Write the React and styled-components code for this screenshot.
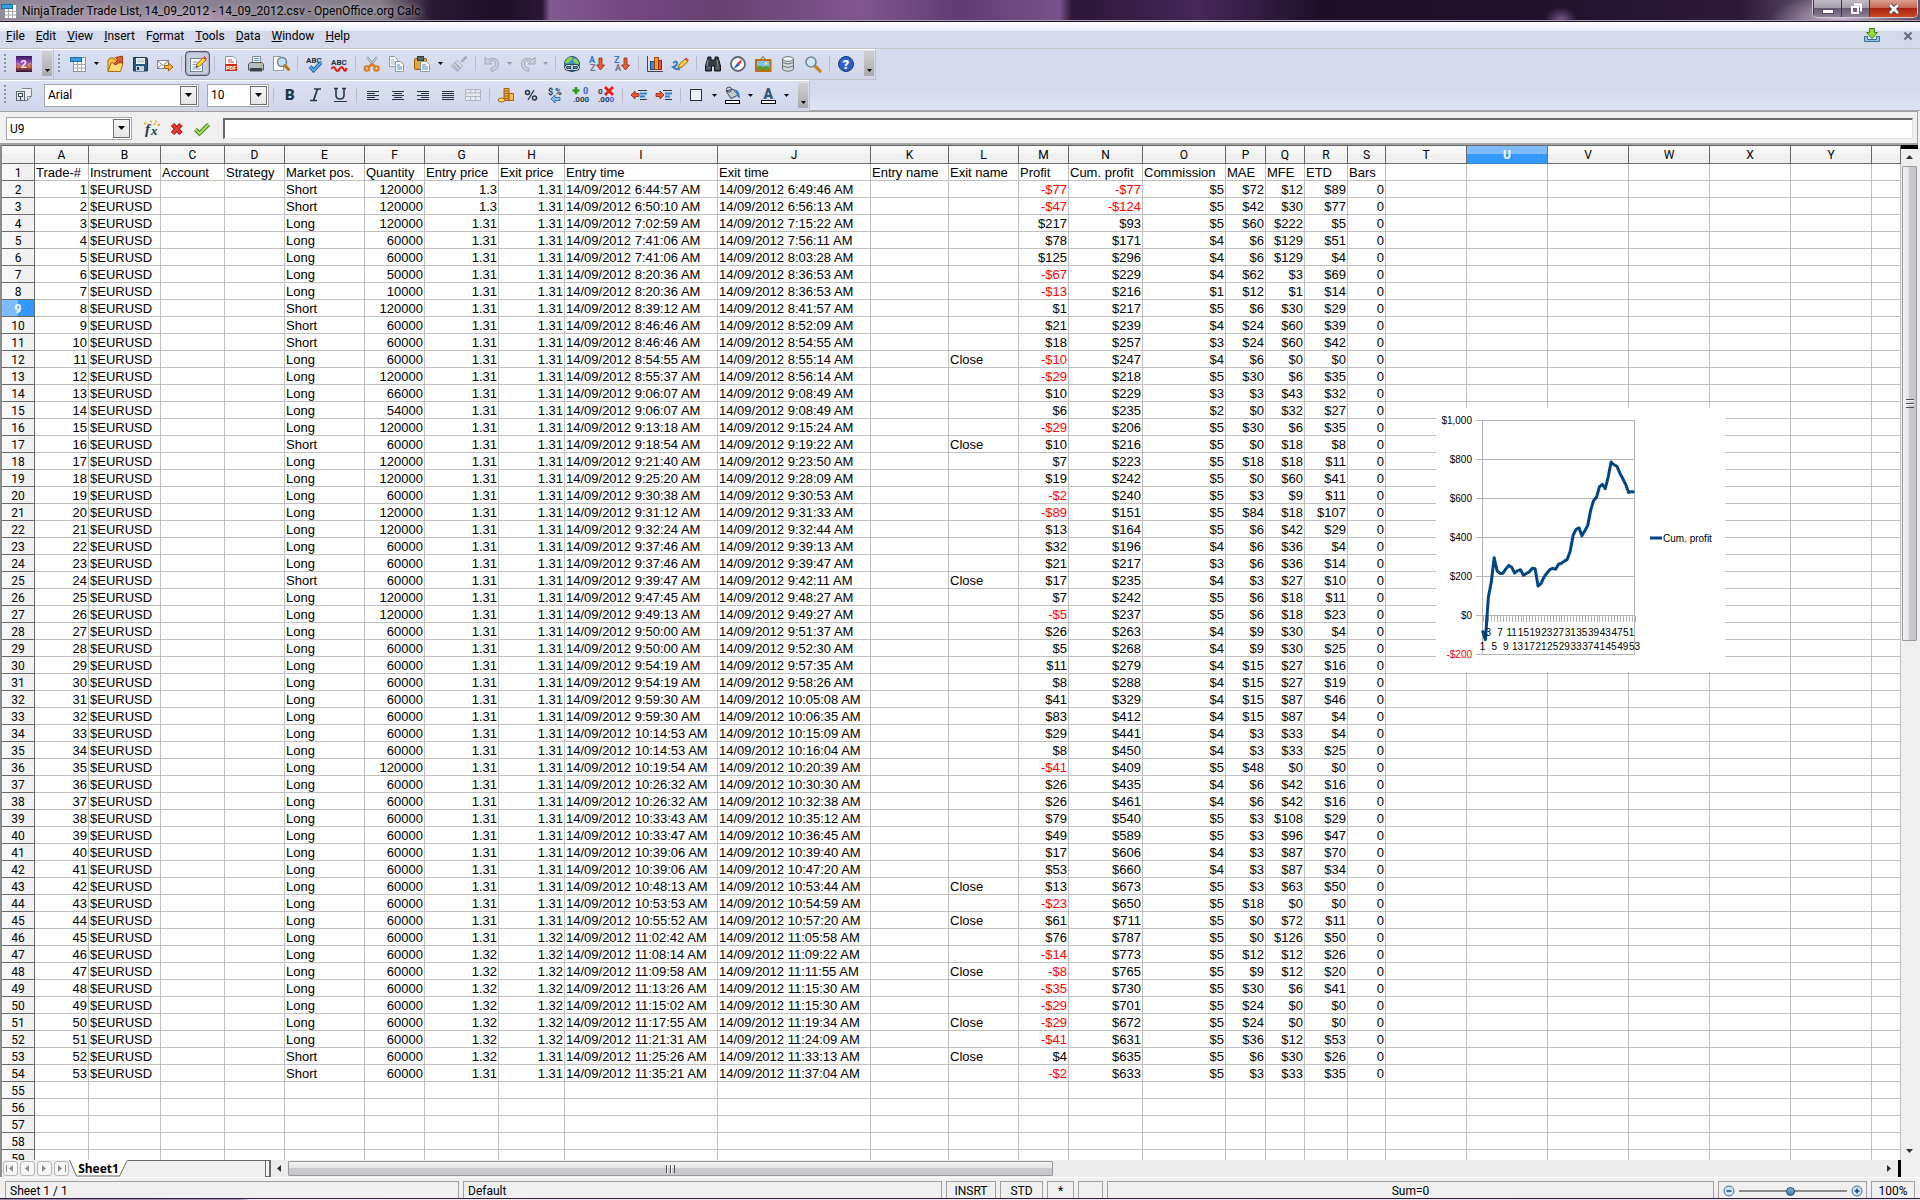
import React, { useState } from 'react'
import styled, { createGlobalStyle } from 'styled-components';


const GlobalStyle = createGlobalStyle`
  * {
    box-sizing: border-box;
  }

  body {
    margin: 0;
    background: #f0f0f0;
    color: #000;
    font-family: Roboto, "Open Sans", sans-serif;
    font-size: 12px;
    overflow: hidden;
  }

  button, select, input {
    font: inherit;
    color: inherit;
    margin: 0;
    padding: 0;
  }
`

// letter, width of every sheet column, the last one takes what is left
const Columns = [
  [ "A", 54 ], [ "B", 72 ], [ "C", 64 ], [ "D", 60 ], [ "E", 80 ], [ "F", 60 ], [ "G", 74 ],
  [ "H", 66 ], [ "I", 153 ], [ "J", 153 ], [ "K", 78 ], [ "L", 70 ], [ "M", 50 ], [ "N", 74 ],
  [ "O", 83 ], [ "P", 40 ], [ "Q", 39 ], [ "R", 43 ], [ "S", 38 ], [ "T", 81 ], [ "U", 81 ],
  [ "V", 81 ], [ "W", 81 ], [ "X", 81 ], [ "Y", 81 ], [ "", null ],
]

const Titles = [
  "Trade-#", "Instrument", "Account", "Strategy", "Market pos.", "Quantity", "Entry price",
  "Exit price", "Entry time", "Exit time", "Entry name", "Exit name", "Profit", "Cum. profit",
  "Commission", "MAE", "MFE", "ETD", "Bars",
]

// position, quantity, entry price, exit price, entry, exit, profit, cumulative, commission, mae, mfe, etd, exit name
const Trades = `
Short 120000 1.3 1.31 6:44:57 6:49:46 -77 -77 5 72 12 89
Short 120000 1.3 1.31 6:50:10 6:56:13 -47 -124 5 42 30 77
Long 120000 1.31 1.31 7:02:59 7:15:22 217 93 5 60 222 5
Long 60000 1.31 1.31 7:41:06 7:56:11 78 171 4 6 129 51
Long 60000 1.31 1.31 7:41:06 8:03:28 125 296 4 6 129 4
Long 50000 1.31 1.31 8:20:36 8:36:53 -67 229 4 62 3 69
Long 10000 1.31 1.31 8:20:36 8:36:53 -13 216 1 12 1 14
Short 120000 1.31 1.31 8:39:12 8:41:57 1 217 5 6 30 29
Short 60000 1.31 1.31 8:46:46 8:52:09 21 239 4 24 60 39
Short 60000 1.31 1.31 8:46:46 8:54:55 18 257 3 24 60 42
Long 60000 1.31 1.31 8:54:55 8:55:14 -10 247 4 6 0 0 Close
Long 120000 1.31 1.31 8:55:37 8:56:14 -29 218 5 30 6 35
Long 66000 1.31 1.31 9:06:07 9:08:49 10 229 3 3 43 32
Long 54000 1.31 1.31 9:06:07 9:08:49 6 235 2 0 32 27
Long 120000 1.31 1.31 9:13:18 9:15:24 -29 206 5 30 6 35
Short 60000 1.31 1.31 9:18:54 9:19:22 10 216 5 0 18 8 Close
Long 120000 1.31 1.31 9:21:40 9:23:50 7 223 5 18 18 11
Long 120000 1.31 1.31 9:25:20 9:28:09 19 242 5 0 60 41
Long 60000 1.31 1.31 9:30:38 9:30:53 -2 240 5 3 9 11
Long 120000 1.31 1.31 9:31:12 9:31:33 -89 151 5 84 18 107
Long 120000 1.31 1.31 9:32:24 9:32:44 13 164 5 6 42 29
Long 60000 1.31 1.31 9:37:46 9:39:13 32 196 4 6 36 4
Long 60000 1.31 1.31 9:37:46 9:39:47 21 217 3 6 36 14
Short 60000 1.31 1.31 9:39:47 9:42:11 17 235 4 3 27 10 Close
Long 120000 1.31 1.31 9:47:45 9:48:27 7 242 5 6 18 11
Long 120000 1.31 1.31 9:49:13 9:49:27 -5 237 5 6 18 23
Long 60000 1.31 1.31 9:50:00 9:51:37 26 263 4 9 30 4
Long 60000 1.31 1.31 9:50:00 9:52:30 5 268 4 9 30 25
Long 60000 1.31 1.31 9:54:19 9:57:35 11 279 4 15 27 16
Long 60000 1.31 1.31 9:54:19 9:58:26 8 288 4 15 27 19
Long 60000 1.31 1.31 9:59:30 10:05:08 41 329 4 15 87 46
Long 60000 1.31 1.31 9:59:30 10:06:35 83 412 4 15 87 4
Long 60000 1.31 1.31 10:14:53 10:15:09 29 441 4 3 33 4
Long 60000 1.31 1.31 10:14:53 10:16:04 8 450 4 3 33 25
Long 120000 1.31 1.31 10:19:54 10:20:39 -41 409 5 48 0 0
Long 60000 1.31 1.31 10:26:32 10:30:30 26 435 4 6 42 16
Long 60000 1.31 1.31 10:26:32 10:32:38 26 461 4 6 42 16
Long 60000 1.31 1.31 10:33:43 10:35:12 79 540 5 3 108 29
Long 60000 1.31 1.31 10:33:47 10:36:45 49 589 5 3 96 47
Long 60000 1.31 1.31 10:39:06 10:39:40 17 606 4 3 87 70
Long 60000 1.31 1.31 10:39:06 10:47:20 53 660 4 3 87 34
Long 60000 1.31 1.31 10:48:13 10:53:44 13 673 5 3 63 50 Close
Long 60000 1.31 1.31 10:53:53 10:54:59 -23 650 5 18 0 0
Long 60000 1.31 1.31 10:55:52 10:57:20 61 711 5 0 72 11 Close
Long 60000 1.31 1.32 11:02:42 11:05:58 76 787 5 0 126 50
Long 60000 1.32 1.32 11:08:14 11:09:22 -14 773 5 12 12 26
Long 60000 1.32 1.32 11:09:58 11:11:55 -8 765 5 9 12 20 Close
Long 60000 1.32 1.32 11:13:26 11:15:30 -35 730 5 30 6 41
Long 60000 1.32 1.32 11:15:02 11:15:30 -29 701 5 24 0 0
Long 60000 1.32 1.32 11:17:55 11:19:34 -29 672 5 24 0 0 Close
Long 60000 1.32 1.32 11:21:31 11:24:09 -41 631 5 36 12 53
Short 60000 1.32 1.31 11:25:26 11:33:13 4 635 5 6 30 26 Close
Short 60000 1.31 1.31 11:35:21 11:37:04 -2 633 5 3 33 35
`.trim().split("\n").map( line => line.split(" ") )

const money = value => value < 0 ? `-$${ -value }` : `$${ value }`

const SheetRows = [ Titles ]

Trades.forEach( ([ pos, qty, entry, exit, start, end, profit, cum, comm, mae, mfe, etd, name ], i) => {
  SheetRows.push([
    i + 1, "$EURUSD", "", "", pos, qty, entry, exit, `14/09/2012 ${ start } AM`, `14/09/2012 ${ end } AM`,
    "", name || "", money(profit), money(cum), money(comm), money(mae), money(mfe), money(etd), 0,
  ])
})

while (SheetRows.length < 59) SheetRows.push([])

const TextColumns = [ 1, 4, 8, 9, 11 ]

const Menus = [ "File", "Edit", "View", "Insert", "F|ormat", "Tools", "Data", "Window", "Help" ]


//window frame
const Window = styled.div`
  display: flex;
  flex-direction: column;
  height: 100vh;
  background: #f0f0f0;
`

const TitleBar = styled.header`
  display: flex;
  align-items: flex-start;
  height: 22px;
  flex: none;
  border-bottom: 1px solid #1e1128;
  box-shadow: inset 0 -1px #a99db3;
  background:
    radial-gradient(ellipse 60px 14px at 190px 20px, rgba(214, 176, 212, .7), transparent),
    radial-gradient(ellipse 50px 12px at 110px 20px, rgba(222, 182, 206, .6), transparent),
    radial-gradient(ellipse 16px 13px at 1561px 20px, #73588c, transparent),
    radial-gradient(ellipse 70px 26px at 1840px 20px, #cbb6d2, transparent),
    linear-gradient(90deg, #93899c 0, #8a8090 180px, #857d88 380px, #2a1833 432px, #1d0f26 500px,
      #2a1734 542px, #80598f 550px, #71467f 640px, #66426f 720px, #80568f 860px, #5e3d70 960px,
      #78528a 1060px, #2b1736 1072px, #46285a 1200px, #1d1026 1320px, #21122b 1540px, #2c1938 1740px, #65566e 1820px);
`

const Title = styled.h1`
  display: flex;
  align-items: center;
  flex: 1;
  gap: 4px;
  height: 22px;
  margin: 0;
  font-size: 12px;
  font-weight: 400;
  line-height: 22px;
  text-shadow: 0 0 6px rgba(255, 255, 255, .5), 0 0 10px rgba(255, 255, 255, .4);
`

const WindowButtons = styled.div`
  display: flex;
  height: 18px;
  margin-right: 2px;
  border: 1px solid #d4ccd8;
  border-top: 0;
  border-radius: 0 0 5px 5px;
  overflow: hidden;
`

const WindowButton = styled.button`
  display: flex;
  align-items: center;
  justify-content: center;
  width: ${(props) => props.$close ? 48 : 28}px;
  border: 0;
  border-left: 1px solid #40344a;
  background: ${(props) => props.$close
    ? "linear-gradient(#d8a090 0, #c66a55 45%, #a82212 50%, #cc4a24 100%)"
    : "linear-gradient(#c2bcc6 0, #a59dab 45%, #675c70 50%, #8b8096 100%)"};
`

const MenuBar = styled.nav`
  display: flex;
  align-items: center;
  height: 27px;
  flex: none;
  padding-top: 2px;
  padding-left: 1px;
  border-bottom: 1px solid #c5c3c6;
  background: linear-gradient(#fff 0, #e4ebf6 9px, #d4d9ec 9px);
`

const MenuItem = styled.button`
  height: 20px;
  padding: 0 6px 0 5px;
  border: 0;
  background: none;
`

const MenuEnd = styled.div`
  display: flex;
  align-items: center;
  gap: 22px;
  margin-left: auto;
  padding-right: 7px;
`

//toolbars
const ToolbarLine = styled.div`
  display: flex;
  height: 31px;
  flex: none;
  background: ${(props) => props.$last ? "linear-gradient(#d4d9ec 40%, #dfe4f5)" : "#d4d9ec"};
  border-bottom: ${(props) => props.$last ? "1px solid #a5a5b4" : 0};
`

const Toolbar = styled.div`
  display: flex;
  align-items: center;
  height: 31px;
  border-top: 1px solid #fff;
  border-right: 1px solid #bfc0c6;
  border-bottom: ${(props) => props.$last ? "0" : "1px solid #c0c0c6"};
  background: linear-gradient(#dbe0f2, #d0d5ea);
  padding: 0 1px 2px 0;
`

const Handle = styled.span`
  width: 11px;
  height: 20px;
  border-left: 4px solid transparent;
  background: repeating-linear-gradient(#8e93a6 0 2px, transparent 2px 4px) 0 0 / 2px 20px no-repeat;
`

const ToolButton = styled.button`
  display: flex;
  align-items: center;
  justify-content: center;
  width: 25px;
  height: 25px;
  border: ${(props) => props.$pressed ? "1px solid #4f5364" : "0"};
  border-radius: 4px;
  background: ${(props) => props.$pressed ? "#c9cee0" : "none"};
  box-shadow: ${(props) => props.$pressed ? "inset 0 0 2px #5b6072" : "none"};
`

const Separator = styled.span`
  width: 8px;
  height: 15px;
  background: linear-gradient(#b9bccb, #b9bccb) 4px 0 / 1px 15px no-repeat;
`

const DropButton = styled.button`
  display: flex;
  align-items: center;
  justify-content: center;
  width: ${(props) => props.$wide ? 12 : 11}px;
  height: 24px;
  border: 0;
  background: none;
  color: ${(props) => props.disabled ? "#9699a6" : "#000"};
`

const Overflow = styled.button`
  display: flex;
  align-items: flex-end;
  justify-content: center;
  width: 10px;
  height: 25px;
  margin-left: 6px;
  padding-bottom: 4px;
  border: 0;
  background: linear-gradient(#d0d0d2, #a9a9ac);
`

const ComboBox = styled.span`
  position: relative;
  display: flex;
  width: ${(props) => props.$width}px;
  height: 23px;
  margin-left: 8px;
  border: 1px solid #a6a6ac;
  background: #fff;
`

const ComboSelect = styled.select`
  appearance: none;
  flex: 1;
  width: 100%;
  padding-left: 3px;
  border: 0;
  background: transparent;
  outline: 0;
`

const ComboArrow = styled.span`
  position: absolute;
  top: 1px;
  right: 1px;
  display: flex;
  align-items: center;
  justify-content: center;
  width: 17px;
  height: 19px;
  border: 1px solid #6e6e6e;
  background: linear-gradient(#f6f6f6, #e4e4e4);
  pointer-events: none;
`

const FormulaBar = styled.div`
  display: flex;
  align-items: center;
  height: 34px;
  flex: none;
  margin-right: 2px;
  padding: 2px 4px 0 0;
  border-top: 1px solid #a0a0a0;
  border-right: 1px solid #a0a0a0;
  border-bottom: 2px solid #a3a3a3;

  & > ${ComboBox} {
    margin: 0 7px 0 6px;
  }
`

const FormulaInput = styled.input`
  flex: 1;
  height: 21px;
  margin-left: 9px;
  padding: 0 4px;
  border: 1px solid #e3e3e3;
  border-top: 2px solid #696969;
  border-left: 2px solid #696969;
  background: #fff;
  outline: 0;
`

//sheet
const SheetArea = styled.main`
  display: flex;
  flex: 1;
  min-height: 0;
  border-left: 2px solid #8a8a8a;
`

const SheetView = styled.div`
  position: relative;
  flex: 1;
  overflow: hidden;
  background: #fff;
`

const Grid = styled.table`
  width: 100%;
  table-layout: fixed;
  border-collapse: separate;
  border-spacing: 0;
  font-family: "Liberation Sans", Arial, sans-serif;
  font-size: 13px;
  line-height: 14px;
`

const ColumnHead = styled.th`
  height: 19px;
  padding: 1px 0 0;
  border: 1px solid ${(props) => props.$active ? "#2b83d8" : "#696969"};
  border-left: 0;
  border-top-color: #696969;
  background: ${(props) => props.$active
    ? "linear-gradient(#7ebcff 50%, #3399ff 50%)"
    : "linear-gradient(#f7f7f7 50%, #f0f0f0 50%)"};
  color: ${(props) => props.$active ? "#fff" : "#000"};
  font-family: Roboto, sans-serif;
  font-size: 12px;
  font-weight: ${(props) => props.$active ? 700 : 400};
`

const RowHead = styled.th`
  height: 17px;
  padding: 2px 0 0;
  border-right: 1px solid #696969;
  border-bottom: 1px solid #696969;
  background: ${(props) => props.$active
    ? "linear-gradient(90deg, #7ebcff 50%, #3399ff 50%)"
    : "linear-gradient(90deg, #f7f7f7 50%, #f0f0f0 50%)"};
  color: ${(props) => props.$active ? "#fff" : "#000"};
  font-family: Roboto, sans-serif;
  font-size: 12px;
  font-weight: ${(props) => props.$active ? 700 : 400};
`

const Cell = styled.td`
  height: 17px;
  padding: 2px 1px 0;
  border-right: 1px solid #c0c0c0;
  border-bottom: 1px solid #c0c0c0;
  text-align: ${(props) => props.$text ? "left" : "right"};
  color: ${(props) => props.$loss ? "#ff0000" : "#000"};
  white-space: nowrap;
`

const ChartFrame = styled.figure`
  position: absolute;
  left: 1434px;
  top: 263px;
  width: 289px;
  height: 264px;
  margin: 0;
  background: #fff;
`

const VerticalBar = styled.div`
  display: flex;
  flex-direction: column;
  align-items: center;
  width: 17px;
  margin-right: 2px;
  border-top: 4px solid #000;
  background: #efefef;
`

const VerticalThumb = styled.div`
  display: flex;
  align-items: center;
  justify-content: center;
  width: 15px;
  height: 47%;
  border: 1px solid #9a9a9c;
  border-radius: 1px;
  background: linear-gradient(90deg, #f4f4f4 0, #e4e4e6 45%, #cacad0 50%, #c4c4ca 100%);
`

const ScrollButton = styled.button`
  display: flex;
  align-items: center;
  justify-content: center;
  width: 17px;
  height: 17px;
  border: 0;
  background: none;
  color: #303030;
`

const SheetFooter = styled.div`
  display: flex;
  align-items: center;
  height: 17px;
  flex: none;
  border-left: 2px solid #8a8a8a;
  background: #efefef;
`

const TabNav = styled.div`
  display: flex;
  gap: 2px;
  padding-left: 1px;
`

const NavButton = styled.button`
  display: flex;
  align-items: center;
  justify-content: center;
  width: 15px;
  height: 15px;
  border: 1px solid #b6b6b6;
  border-radius: 3px;
  background: #f6f6f6;
  color: #8c8c8c;
`

const Tab = styled.button`
  position: relative;
  width: 59px;
  height: 17px;
  border: 0;
  background: none;
  font-family: "Open Sans", sans-serif;
  font-size: 12px;
  font-weight: 700;
  line-height: 16px;

  svg {
    position: absolute;
    left: 0;
    top: 0;
  }

  span {
    position: relative;
  }
`

const TabSpace = styled.div`
  width: 137px;
  height: 17px;
  border-top: 1px solid #696969;
`

const Splitter = styled.div`
  width: 6px;
  height: 17px;
  border: 1px solid #696969;
  border-right-width: 2px;
  background: #f4f4f4;
`

const HorizontalBar = styled.div`
  display: flex;
  align-items: center;
  flex: 1;
  height: 17px;
  background: #ececec;
`

const Track = styled.div`
  flex: 1;
`

const HorizontalThumb = styled.div`
  display: flex;
  align-items: center;
  justify-content: center;
  width: 47%;
  height: 15px;
  border: 1px solid #9a9a9c;
  border-radius: 1px;
  background: linear-gradient(#f4f4f4 0, #e4e4e6 45%, #cacad0 50%, #c4c4ca 100%);
`

const BarEnd = styled.div`
  width: 3px;
  height: 17px;
  margin-right: 19px;
  background: #000;
`

//status bar
const StatusBar = styled.footer`
  display: flex;
  gap: 4px;
  height: 21px;
  flex: none;
  padding: 3px 5px 0;
  border-top: 1px solid #fff;
`

const StatusField = styled.div`
  display: flex;
  align-items: center;
  justify-content: ${(props) => props.$left ? "flex-start" : "center"};
  flex: ${(props) => props.$grow ? `${ props.$grow } 1 0` : "none"};
  width: ${(props) => props.$width ? `${ props.$width }px` : "auto"};
  padding: ${(props) => props.$left ? "2px 4px 0" : "2px 0 0"};
  border: 1px solid #a0a0a0;
  border-bottom: 0;
`

const ZoomButton = styled.button`
  display: flex;
  width: 12px;
  height: 12px;
  border: 0;
  background: none;
`

const ZoomSlider = styled.input`
  appearance: none;
  width: 108px;
  height: 12px;
  margin: 0 4px;
  background: linear-gradient(#8a8a8a, #8a8a8a) 0 5px / 100% 2px no-repeat;

  &::-webkit-slider-thumb {
    appearance: none;
    width: 9px;
    height: 9px;
    border: 1px solid #1f4566;
    border-radius: 50%;
    background: linear-gradient(#86b3d6, #3f78a6);
  }
`

const Desktop = styled.div`
  height: 2px;
  flex: none;
  border-top: 1px solid #33203f;
  background: linear-gradient(90deg, #9d86ac 0, #a58fb5 240px, #efeaf2 250px, #e6dfea 100%);
`


//icons
const Svg = ({ size = 18, children }) => (
  <svg width={ size } height={ size } viewBox="0 0 18 18" aria-hidden="true">{ children }</svg>
)

const Arrow = ({ dir = "down" }) => {
  const points = {
    down: "0,1 7,1 3.5,5",
    up: "0,5 7,5 3.5,1",
    left: "5,0 5,7 1,3.5",
    right: "1,0 1,7 5,3.5",
  }
  return <svg width="7" height="7" viewBox="0 0 7 7" aria-hidden="true"><polygon points={ points[dir] } fill="currentColor" /></svg>
}

const SmallArrow = () => (
  <svg width="5" height="3" viewBox="0 0 5 3" aria-hidden="true"><polygon points="0,0 5,0 2.5,3" fill="currentColor" /></svg>
)

const SheetIcon = () => (
  <Svg>
    <rect x="4.5" y="2.5" width="12" height="14" fill="#fff" stroke="#8b929a" />
    <path d="M4.5 9.5h12M4.5 13h12M8.5 3v13.5M12.5 3v13.5" stroke="#a2a8ae" fill="none" />
    <rect x="1.5" y="2.5" width="11" height="4" fill="#34a0e0" stroke="#1a6fae" />
  </Svg>
)

const Page = ({ x = 3, y = 1, w = 12, h = 15 }) => (
  <path d={ `M${ x }.5 ${ y }.5h${ w - 4 }l3 3v${ h - 4 }h-${ w - 1 }z` } fill="#fdfdfd" stroke="#8f98a3" />
)

const SortIcon = ({ top, bottom }) => (
  <Svg>
    <text x="1" y="8" fontSize="9" fontWeight="700" fill="#1d7fd0">{ top }</text>
    <text x="2" y="16" fontSize="9" fontWeight="700" fill="#6d7680">{ bottom }</text>
    <path d="M11 3h3v7h2.500l-4 5-4-5H11z" fill="#ee5f35" stroke="#8e2408" strokeWidth=".8" />
  </Svg>
)

const Icons = {
  logo: (
    <Svg>
      <defs>
        <linearGradient id="logo" x1="0" y1="0" x2="0" y2="1">
          <stop offset="0" stopColor="#3a1560" /><stop offset=".5" stopColor="#a05ac0" /><stop offset=".65" stopColor="#c95b40" /><stop offset="1" stopColor="#30103c" />
        </linearGradient>
      </defs>
      <rect x="1" y="1" width="16" height="16" fill="url(#logo)" />
      <text x="5.5" y="13" fontSize="11" fontWeight="700" fill="#f1e5ff">2</text>
      <path d="M2 8l3 2-2 3M16 8l-3 2 2 3" stroke="#e6a45c" fill="none" />
    </Svg>
  ),
  sheet: <SheetIcon />,
  open: (
    <Svg>
      <path d="M2 16V5l2-2h4l1 2h5v3" fill="#f7c545" stroke="#a96a10" />
      <path d="M2 16.5L5 8h12l-2.500 8.500z" fill="#ffdb73" stroke="#a96a10" />
      <path d="M8 9l4-4-2.500-2.500L16.500 1v7L14 6l-4 4z" fill="#e8562d" stroke="#98250c" strokeWidth=".8" />
    </Svg>
  ),
  save: (
    <Svg>
      <path d="M2.5 2.5h13l1 1v12.500h-14z" fill="#29567e" stroke="#17354f" />
      <rect x="5" y="3" width="9" height="6" fill="#f4f7fa" />
      <path d="M6 5h7M6 7h7" stroke="#a8b8c6" />
      <rect x="5" y="11" width="8" height="5" fill="#c9d3dd" /><rect x="6" y="12" width="2" height="3" fill="#17354f" />
    </Svg>
  ),
  mail: (
    <Svg>
      <rect x="1.5" y="5.5" width="11" height="8" fill="#f8f8f8" stroke="#7c858f" />
      <path d="M1.5 5.5L7 10.5l5.500-5M1.500 13.5L5.500 9.5" fill="none" stroke="#7c858f" />
      <path d="M8.5 10.5h4v-2.500l4.500 4-4.500 4v-2.500h-4z" fill="#fbb53a" stroke="#a55e0a" />
    </Svg>
  ),
  edit: (
    <Svg>
      <rect x="1.5" y="3.5" width="12" height="13" fill="#fff" stroke="#6e8799" />
      <path d="M3.5 7h6M3.5 9.5h4M3.5 12h4M3.5 14h8" stroke="#6ba3cf" />
      <path d="M7 12.5l1-3.500L14 2.5l3 2.500-6.500 6.500z" fill="#fbcf3c" stroke="#8e6310" strokeWidth=".9" />
      <path d="M14 2.5l1.500-1.500 2.500 2.500-1.200 1.700z" fill="#e04a43" />
      <path d="M7 12.5l.6-2 1.400 1.300z" fill="#333" />
    </Svg>
  ),
  pdf: (
    <Svg>
      <Page />
      <path d="M6 5h4M6 7h6" stroke="#d74a43" />
      <rect x="3" y="9" width="12" height="7" rx="1" fill="#d8231c" />
      <text x="4" y="15" fontSize="5.5" fontWeight="900" fill="#fff">PDF</text>
    </Svg>
  ),
  print: (
    <Svg>
      <path d="M5.5 1.5h8v7h-8z" fill="#f3f8fc" stroke="#7b8a98" />
      <path d="M7 3.5h5M7 5.5h5" stroke="#5f9bcb" />
      <path d="M1.5 9l2-1.500h11l2 1.500v6h-15z" fill="#b9bdc2" stroke="#50565d" />
      <rect x="3" y="13" width="12" height="3.5" fill="#3e444b" /><rect x="13" y="10" width="2" height="1.5" fill="#6bdd30" />
    </Svg>
  ),
  preview: (
    <Svg>
      <Page x={ 1 } w={ 11 } />
      <circle cx="10" cy="7" r="4.5" fill="#bfe0f5" stroke="#6d8498" strokeWidth="1.5" />
      <path d="M13 10.5l3.500 4" stroke="#b57a17" strokeWidth="3" strokeLinecap="round" />
    </Svg>
  ),
  spell: (
    <Svg>
      <text x="1" y="8" fontSize="8" fontWeight="700" fill="#22303c">ABC</text>
      <path d="M5 11.5l3.500 4 7.500-8" fill="none" stroke="#1d5c99" strokeWidth="3.6" />
      <path d="M5 11.5l3.500 4 7.500-8" fill="none" stroke="#62b3f0" strokeWidth="1.8" />
    </Svg>
  ),
  autospell: (
    <Svg>
      <text x="1" y="10" fontSize="8" fontWeight="700" fill="#22303c">ABC</text>
      <path d="M1.5 14q2-4 4 0t4 0 4 0 3-1" fill="none" stroke="#d8231c" strokeWidth="2.2" />
    </Svg>
  ),
  cut: (
    <Svg>
      <path d="M4 2l8 10M14 2L6 12" stroke="#8b939b" strokeWidth="2.2" />
      <path d="M4 2l6 7.500M14 2L8.500 9" stroke="#eef1f4" strokeWidth=".8" />
      <circle cx="4" cy="13.5" r="2.3" fill="none" stroke="#e07a10" strokeWidth="2" />
      <circle cx="13.5" cy="13.5" r="2.3" fill="none" stroke="#e07a10" strokeWidth="2" />
      <path d="M6 12l3-3 3 3" fill="none" stroke="#e07a10" strokeWidth="2" />
    </Svg>
  ),
  copy: (
    <Svg>
      <Page x={ 1 } w={ 9 } h={ 11 } />
      <path d="M3 5h3M3 7h5M3 9h4" stroke="#8fb6d6" />
      <Page x={ 7 } y={ 6 } w={ 9 } h={ 11 } />
      <path d="M9 10h3M9 12h5M9 14h5" stroke="#5192c8" />
    </Svg>
  ),
  paste: (
    <Svg>
      <rect x="1.5" y="3.5" width="12" height="11" rx="1" fill="#e9a52b" stroke="#8e5c0b" />
      <rect x="4.5" y="1.5" width="6" height="4" fill="#5c646d" stroke="#333a41" />
      <Page x={ 7 } y={ 6 } w={ 10 } h={ 11 } />
      <path d="M9 10h4M9 12h6M9 14h6" stroke="#5192c8" />
    </Svg>
  ),
  brush: (
    <Svg>
      <path d="M16.5 1.5l-5 5.500" stroke="#a6a9b4" strokeWidth="2.5" />
      <path d="M7 5.5l5.500 5.500-2 2L5 7.5z" fill="#e2e4ea" stroke="#a3a6b2" />
      <path d="M5 7.5L1.500 11l6 5.500 3-3.500z" fill="#c9ccd6" stroke="#a3a6b2" />
      <path d="M4 11l4 4M6 9.5l3.500 3.500" stroke="#a3a6b2" />
    </Svg>
  ),
  undo: (
    <Svg>
      <path d="M2 2v7h7l-2.500-2.500q5-2.500 6 1.500 1 4-5 5.500l1 3q8-2 7-9-2-6.500-11-3z" fill="#ccd0dc" stroke="#a3a8b8" />
    </Svg>
  ),
  redo: (
    <Svg>
      <path d="M16 2v7H9l2.500-2.500q-5-2.500-6 1.500-1 4 5 5.500l-1 3q-8-2-7-9 2-6.500 11-3z" fill="#ccd0dc" stroke="#a3a8b8" />
    </Svg>
  ),
  globe: (
    <Svg>
      <circle cx="9" cy="9" r="7.5" fill="#3f8fd0" stroke="#1b4d7d" />
      <path d="M3 5q3-4 6-3 1 2-2 4-1 3-5 2zM11 3q4 1 5 6-3 1-4-1-3-2-1-5z" fill="#8fd13f" />
      <rect x="2.5" y="10.5" width="7" height="4" rx="2" fill="none" stroke="#23333f" strokeWidth="2.4" />
      <rect x="8.5" y="10.5" width="7" height="4" rx="2" fill="none" stroke="#23333f" strokeWidth="2.4" />
      <rect x="2.5" y="10.5" width="7" height="4" rx="2" fill="none" stroke="#eef3f6" />
      <rect x="8.5" y="10.5" width="7" height="4" rx="2" fill="none" stroke="#eef3f6" />
    </Svg>
  ),
  sortUp: <SortIcon top="A" bottom="Z" />,
  sortDown: <SortIcon top="Z" bottom="A" />,
  chart: (
    <Svg>
      <path d="M1.5 1v15.500H17" stroke="#3b4652" fill="none" />
      <rect x="4.5" y="6.5" width="4" height="8" fill="#3f8fd0" stroke="#174a78" />
      <rect x="8.5" y="2.5" width="4" height="12" fill="#fb9a2a" stroke="#a3430a" />
      <rect x="12.5" y="5.5" width="3" height="9" fill="#ea5324" stroke="#932a08" />
    </Svg>
  ),
  draw: (
    <Svg>
      <path d="M2 8q4-3 4 0t-4 4q3 3 7 2" fill="none" stroke="#2f83cc" strokeWidth="2" />
      <path d="M7 13l1.500-4L14 4l3 2.500-6 5.500z" fill="#fbcf3c" stroke="#8e6310" strokeWidth=".9" />
      <path d="M13.5 4l1.500-1.500 3 2.500-1.500 1.800z" fill="#e04a43" />
    </Svg>
  ),
  find: (
    <Svg>
      <path d="M4 2h3v3h4V2h3l2.500 9v5h-6v-5h-3v5h-6v-5z" fill="#3a3f45" stroke="#14171a" />
      <path d="M4 5l-1 6M13 5l1 6" stroke="#8b939b" strokeWidth="1.2" />
      <rect x="2.5" y="11.5" width="4" height="3" fill="#59626b" /><rect x="11.5" y="11.5" width="4" height="3" fill="#59626b" />
    </Svg>
  ),
  navigator: (
    <Svg>
      <circle cx="9" cy="9" r="7" fill="#fff" stroke="#5f6a75" strokeWidth="1.8" />
      <path d="M14 3.5l-3.500 7L8 8z" fill="#e23b28" /><path d="M4 14.5L8 8l2.500 2.500z" fill="#2a6fc0" />
    </Svg>
  ),
  gallery: (
    <Svg>
      <path d="M6 5l3-3.500L12 5" fill="none" stroke="#6a5a3c" />
      <rect x="2" y="5" width="14.5" height="11" fill="#7cc3f2" stroke="#b86f0c" strokeWidth="2" />
      <path d="M3 15v-3q3-3 6 0 3-2 6.500 0v3z" fill="#5e9b2e" />
      <circle cx="12" cy="8.5" r="1.3" fill="#ffe95c" />
    </Svg>
  ),
  database: (
    <Svg>
      <path d="M3.5 4v10.500q5.500 3.500 11 0V4" fill="#d8dbde" stroke="#6b7178" />
      <path d="M3.5 7.5q5.500 3 11 0M3.500 11q5.500 3 11 0" fill="none" stroke="#6b7178" />
      <ellipse cx="9" cy="4" rx="5.5" ry="2.3" fill="#f4f5f6" stroke="#6b7178" />
    </Svg>
  ),
  zoom: (
    <Svg>
      <path d="M11 11l5 5" stroke="#c8861c" strokeWidth="3.2" strokeLinecap="round" />
      <circle cx="7" cy="7" r="5" fill="#cfe8f8" stroke="#70879a" strokeWidth="1.6" />
    </Svg>
  ),
  help: (
    <Svg>
      <circle cx="9" cy="9" r="7.5" fill="#2c5fc4" stroke="#183a80" />
      <text x="5.5" y="14" fontSize="13" fontWeight="900" fill="#fff">?</text>
    </Svg>
  ),
  styles: (
    <Svg>
      <path d="M6.5 2.5h10v8l-4 4h-3" fill="#eceef2" stroke="#808894" />
      <path d="M16.5 10.5h-4v4" fill="none" stroke="#808894" />
      <rect x="1.5" y="5.5" width="8" height="9" fill="#dfe4ea" stroke="#5f6974" />
      <path d="M5.5 8v6" stroke="#3b4652" /><rect x="3.5" y="7.5" width="4" height="3" fill="#fff" stroke="#3b4652" />
    </Svg>
  ),
  bold: <Svg><text x="4" y="14" fontSize="15" fontWeight="900" fill="#22384d">B</text></Svg>,
  italic: <Svg><path d="M8 3h7M4 14.5h7M11.5 3L7.500 14.5" stroke="#22384d" strokeWidth="1.7" fill="none" /></Svg>,
  underline: <Svg><path d="M3 2.5h4M11 2.5h4M5 3v6q0 4 4 4t4-4V3" stroke="#22384d" strokeWidth="1.6" fill="none" /><path d="M3 15.5h13" stroke="#22384d" /></Svg>,
  left: <Svg><path d="M3 5.5h12M3 7.5h8M3 9.5h12M3 11.5h8M3 13.5h12" stroke="#263440" /></Svg>,
  center: <Svg><path d="M3 5.5h12M5 7.5h8M3 9.5h12M5 11.5h8M3 13.5h12" stroke="#263440" /></Svg>,
  right: <Svg><path d="M3 5.5h12M7 7.5h8M3 9.5h12M7 11.5h8M3 13.5h12" stroke="#263440" /></Svg>,
  justify: <Svg><path d="M3 5.5h12M3 7.5h12M3 9.5h12M3 11.5h12M3 13.5h12" stroke="#263440" /></Svg>,
  merge: <Svg><path d="M1.5 3.5h15v11h-15zM1.500 7h15M1.500 10.5h15M6.500 3.5V7M11.500 3.5V7M6.500 10.5v4M11.500 10.5v4" fill="#e6e8f0" stroke="#b1b5c2" /></Svg>,
  currency: (
    <Svg>
      <path d="M7 2.5h5v12H7z" fill="#f2a93a" stroke="#a3620b" />
      <path d="M7 5h5M7 7.5h5M7 10h5M7 12.5h5" stroke="#a3620b" />
      <path d="M12 7.5h4.500v7H12z" fill="#f7bd5a" stroke="#a3620b" />
      <ellipse cx="4.5" cy="14" rx="3.5" ry="2" fill="#ffd27d" stroke="#a3620b" />
    </Svg>
  ),
  percent: <Svg><circle cx="5.5" cy="6.5" r="2" fill="none" stroke="#22384d" strokeWidth="1.5" /><circle cx="12.5" cy="12" r="2" fill="none" stroke="#22384d" strokeWidth="1.5" /><path d="M12 4L6 14" stroke="#22384d" strokeWidth="1.3" /></Svg>,
  standard: (
    <Svg>
      <text x="1" y="9" fontSize="9" fontWeight="700" fill="#22384d">$</text>
      <text x="8" y="9" fontSize="9" fontWeight="700" fill="#22384d">%</text>
      <path d="M4 13l4-4v2.500h5v3H8V17z" fill="#7fc0ee" stroke="#1d5c99" strokeWidth=".8" />
    </Svg>
  ),
  addDecimal: (
    <Svg>
      <path d="M4 1v7M0.500 4.5h7" stroke="#2c9a16" strokeWidth="2.600" />
      <text x="11" y="8" fontSize="9" fontWeight="700" fill="#2a6ad8">0</text>
      <text x="1" y="16" fontSize="8" fontWeight="700" fill="#22384d">.000</text>
    </Svg>
  ),
  deleteDecimal: (
    <Svg>
      <text x="1" y="8" fontSize="8" fontWeight="700" fill="#22384d">0</text>
      <path d="M8 1l8 8M16 1L8 9" stroke="#dc2318" strokeWidth="2.8" />
      <text x="1" y="16" fontSize="8" fontWeight="700" fill="#22384d">.00<tspan fill="#2a6ad8">0</tspan></text>
    </Svg>
  ),
  outdent: (
    <Svg>
      <path d="M8 4.5h9M10 13.5h7" stroke="#22384d" /><path d="M10 7.5h7M10 10.5h5" stroke="#2f83cc" strokeWidth="2" />
      <path d="M1 9l4-4v2.500h4v3H5V13z" fill="#ec5c34" stroke="#8e2408" strokeWidth=".8" />
    </Svg>
  ),
  indent: (
    <Svg>
      <path d="M8 4.5h9M10 13.5h7" stroke="#22384d" /><path d="M10 7.5h7M10 10.5h5" stroke="#2f83cc" strokeWidth="2" />
      <path d="M9 9L5 5v2.500H1v3h4V13z" fill="#ec5c34" stroke="#8e2408" strokeWidth=".8" />
    </Svg>
  ),
  borders: <Svg><rect x="2.5" y="3.5" width="11" height="11" fill="#eef1f8" stroke="#263440" /></Svg>,
  fill: (
    <Svg>
      <path d="M2 5l7-2 5 6-7 3.500z" fill="#c3c8cd" stroke="#3b4652" />
      <circle cx="5" cy="3.5" r="2.5" fill="none" stroke="#3b4652" />
      <path d="M10 3q6 1 6 9-3 0-3-4z" fill="#2f83cc" />
      <rect x="1.5" y="14.5" width="14" height="3" fill="#fff" stroke="#000" />
    </Svg>
  ),
  fontColor: (
    <Svg>
      <text x="3.5" y="13" fontSize="14" fontWeight="900" fill="#2f5678">A</text>
      <rect x="1.5" y="14.5" width="14" height="3" fill="#fff" stroke="#000" />
    </Svg>
  ),
  fx: (
    <Svg>
      <text x="2" y="14" fontFamily="Liberation Serif" fontStyle="italic" fontWeight="700" fontSize="15" fill="#22384d">f</text>
      <text x="8" y="15" fontFamily="Liberation Serif" fontStyle="italic" fontWeight="700" fontSize="13" fill="#22384d">x</text>
      <path d="M1 3.5h2.500M2.200 2.200v2.500M7 1.5h2M12 1.5h2M14.500 5h2.500M15.700 3.8v2.500M10.500 4h2" stroke="#e7ac12" strokeWidth="1.3" />
    </Svg>
  ),
  cancel: <Svg><path d="M4.5 4.5l8.500 9M13 4.5l-8.500 9" stroke="#8c0f0a" strokeWidth="4.6" /><path d="M4.5 4.5l8.500 9M13 4.5l-8.500 9" stroke="#ec3a32" strokeWidth="2.6" /></Svg>,
  accept: <Svg><path d="M2.5 9.5l4 4 9-9" fill="none" stroke="#3c7d12" strokeWidth="4" /><path d="M2.5 9.5l4 4 9-9" fill="none" stroke="#a8e05a" strokeWidth="2" /></Svg>,
}

// "|" is a separator, a trailing "+" adds the drop-down arrow, "*" the wider one
const StandardTools = [
  "sheet*", "open", "save", "mail", "|", "edit", "|", "pdf", "print", "preview", "|", "spell", "autospell", "|",
  "cut", "copy", "paste*", "brush", "|", "undo+", "redo+", "|", "globe", "sortUp", "sortDown", "|", "chart", "draw", "|",
  "find", "navigator", "gallery", "database", "zoom", "|", "help",
]

const FormatTools = [
  "bold", "italic", "underline", "|", "left", "center", "right", "justify", "merge", "|", "currency", "percent",
  "standard", "addDecimal", "deleteDecimal", "|", "outdent", "indent", "|", "borders+", "fill+", "fontColor+",
]

const Tools = ({ list }) => list.map( (item, i) => {
  if (item === "|") return <Separator key={ i } />
  const name = item.replace(/[+*]/, "")
  const off = name === "undo" || name === "redo"
  return (
    <React.Fragment key={ i }>
      <ToolButton type="button" aria-label={ name } $pressed={ name === "edit" }>{ Icons[name] }</ToolButton>
      { name !== item && (
        <DropButton type="button" aria-label={ `${ name } options` } disabled={ off } $wide={ item.endsWith("*") }><SmallArrow /></DropButton>
      )}
    </React.Fragment>
  )
})

const Combo = ({ label, value, width }) => (
  <ComboBox $width={ width }>
    <ComboSelect aria-label={ label } defaultValue={ value }>
      <option>{ value }</option>
    </ComboSelect>
    <ComboArrow><Arrow /></ComboArrow>
  </ComboBox>
)

const ChartLabels = [ 1000, 800, 600, 400, 200, 0, -200 ]

const Chart = () => {
  const x = i => 46.5 + i * 152 / 52
  const y = value => 207.5 - value * .195
  const line = Trades.map( (trade, i) => `${ x(i) },${ y(trade[7]) }` ).join(" ")
  const numbers = Trades.map( (_, i) => i + 1 ).filter( n => n % 2 )

  return (
    <ChartFrame>
      <svg width="289" height="264" role="img" aria-label="Cum. profit" fontFamily="Liberation Sans" fontSize="10">
        { ChartLabels.map( value => (
          <g key={ value }>
            <path d={ `M40 ${ y(value) }H198.5` } stroke="#b3b3b3" />
            <text x="36" y={ y(value) + 3.5 } textAnchor="end" fill={ value < 0 ? "#ff0000" : "#000" }>
              { money(value).replace("1000", "1,000") }
            </text>
          </g>
        ))}
        <path d="M46.5 12v235M198.5 12v235" stroke="#b3b3b3" />
        { Trades.map( (_, i) => <path key={ i } d={ `M${ Math.round(x(i)) + .5 } 208v6` } stroke="#b3b3b3" /> )}
        <polyline points={ line } fill="none" stroke="#004586" strokeWidth="3" strokeLinejoin="round" />
        { numbers.map( n => (
          <text key={ n } x={ x(n - 1) } y={ n % 4 === 3 ? 228 : 242 } textAnchor="middle">{ n }</text>
        ))}
        <path d="M214 130h12" stroke="#004586" strokeWidth="3" />
        <text x="227" y="134">Cum. profit</text>
      </svg>
    </ChartFrame>
  )
}


const App = () => {

  const [ zoom, setZoom ] = useState( 48 );


  return (
    <Window>
      <GlobalStyle />
      <TitleBar>
        <Title><SheetIcon />NinjaTrader Trade List, 14_09_2012 - 14_09_2012.csv - OpenOffice.org Calc</Title>
        <WindowButtons>
          <WindowButton type="button" aria-label="Minimize">
            <svg width="12" height="12"><rect x=".5" y="6.5" width="11" height="4" fill="#fff" stroke="#554a5e" /></svg>
          </WindowButton>
          <WindowButton type="button" aria-label="Restore">
            <svg width="12" height="12"><path d="M4 1.5h7v7M2 4h6v6H2z" fill="none" stroke="#fff" strokeWidth="2" /></svg>
          </WindowButton>
          <WindowButton type="button" aria-label="Close" $close>
            <svg width="12" height="12"><path d="M2 2l8 8M10 2l-8 8" stroke="#4d3a44" strokeWidth="4.5" /><path d="M2 2l8 8M10 2l-8 8" stroke="#fff" strokeWidth="2.6" /></svg>
          </WindowButton>
        </WindowButtons>
      </TitleBar>

      <MenuBar>
        { Menus.map( menu => {
          const [ start, rest ] = menu.includes("|") ? menu.split("|") : [ "", menu ]
          return <MenuItem type="button" key={ menu }>{ start }<u>{ rest[0] }</u>{ rest.slice(1) }</MenuItem>
        })}
        <MenuEnd>
          <Svg>
            <path d="M1.5 9.5h3v3h9v-3h3v5h-15z" fill="#8fc3e6" stroke="#3c6d92" />
            <path d="M6.5 1.5h5v4h3L9 11.5 3.500 5.5h3z" fill="#9bd63c" stroke="#3d8212" />
          </Svg>
          <svg width="10" height="10" aria-hidden="true"><path d="M1.5 1.5l7 7M8.500 1.5l-7 7" stroke="#616b7c" strokeWidth="2" /></svg>
        </MenuEnd>
      </MenuBar>

      <ToolbarLine>
        <Toolbar>
          <Handle />
          <ToolButton type="button" aria-label="logo">{ Icons.logo }</ToolButton>
          <Overflow type="button" aria-label="More"><SmallArrow /></Overflow>
        </Toolbar>
        <Toolbar>
          <Handle />
          <Tools list={ StandardTools } />
          <Overflow type="button" aria-label="More standard tools"><SmallArrow /></Overflow>
        </Toolbar>
      </ToolbarLine>
      <ToolbarLine $last>
        <Toolbar $last>
          <Handle />
          <ToolButton type="button" aria-label="styles">{ Icons.styles }</ToolButton>
          <Combo label="Font name" value="Arial" width={ 155 } />
          <Combo label="Font size" value="10" width={ 62 } />
          <Separator />
          <Tools list={ FormatTools } />
          <Overflow type="button" aria-label="More formatting tools"><SmallArrow /></Overflow>
        </Toolbar>
      </ToolbarLine>

      <FormulaBar>
        <Combo label="Name box" value="U9" width={ 126 } />
        <ToolButton type="button" aria-label="Function wizard">{ Icons.fx }</ToolButton>
        <ToolButton type="button" aria-label="Cancel">{ Icons.cancel }</ToolButton>
        <ToolButton type="button" aria-label="Accept">{ Icons.accept }</ToolButton>
        <FormulaInput type="text" aria-label="Input line" />
      </FormulaBar>

      <SheetArea>
        <SheetView>
          <Grid>
            <colgroup>
              <col width="33" />
              { Columns.map( ([ letter, width ]) => <col key={ letter } width={ width || undefined } /> )}
            </colgroup>
            <thead>
              <tr>
                <ColumnHead />
                { Columns.map( ([ letter ]) => (
                  <ColumnHead key={ letter } scope="col" $active={ letter === "U" }>{ letter }</ColumnHead>
                ))}
              </tr>
            </thead>
            <tbody>
              { SheetRows.map( (row, r) => (
                <tr key={ r }>
                  <RowHead scope="row" $active={ r === 8 }>{ r + 1 }</RowHead>
                  { Columns.map( ([ letter ], c) => (
                    <Cell key={ letter } $text={ r === 0 || TextColumns.includes(c) } $loss={ String(row[c]).startsWith("-") }>
                      { row[c] }
                    </Cell>
                  ))}
                </tr>
              ))}
            </tbody>
          </Grid>
          <Chart />
        </SheetView>
        <VerticalBar>
          <ScrollButton type="button" aria-label="Scroll up"><Arrow dir="up" /></ScrollButton>
          <VerticalThumb>
            <svg width="8" height="9" aria-hidden="true"><path d="M0 .5h8M0 4.5h8M0 8.5h8" stroke="#4d4d52" /><path d="M0 1.5h8M0 5.5h8" stroke="#fff" /></svg>
          </VerticalThumb>
          <Track />
          <ScrollButton type="button" aria-label="Scroll down"><Arrow /></ScrollButton>
        </VerticalBar>
      </SheetArea>

      <SheetFooter>
        <TabNav>
          <NavButton type="button" aria-label="First sheet"><svg width="2" height="7"><path d="M.5 0v7" stroke="#8c8c8c" /></svg><Arrow dir="left" /></NavButton>
          <NavButton type="button" aria-label="Previous sheet"><Arrow dir="left" /></NavButton>
          <NavButton type="button" aria-label="Next sheet"><Arrow dir="right" /></NavButton>
          <NavButton type="button" aria-label="Last sheet"><Arrow dir="right" /><svg width="2" height="7"><path d="M1.5 0v7" stroke="#8c8c8c" /></svg></NavButton>
        </TabNav>
        <Tab type="button">
          <svg width="59" height="17" aria-hidden="true"><path d="M.5 0L7.500 16h43L58.500 0" fill="#fff" stroke="#696969" /></svg>
          <span>Sheet1</span>
        </Tab>
        <TabSpace />
        <Splitter />
        <HorizontalBar>
          <ScrollButton type="button" aria-label="Scroll left"><Arrow dir="left" /></ScrollButton>
          <HorizontalThumb>
            <svg width="9" height="8" aria-hidden="true"><path d="M.5 0v8M4.500 0v8M8.500 0v8" stroke="#4d4d52" /><path d="M1.5 0v8M5.500 0v8" stroke="#fff" /></svg>
          </HorizontalThumb>
          <Track />
          <ScrollButton type="button" aria-label="Scroll right"><Arrow dir="right" /></ScrollButton>
        </HorizontalBar>
        <BarEnd />
      </SheetFooter>

      <StatusBar>
        <StatusField $left $width={ 454 }>Sheet 1 / 1</StatusField>
        <StatusField $left $width={ 479 }>Default</StatusField>
        <StatusField $width={ 50 }>INSRT</StatusField>
        <StatusField $width={ 43 }>STD</StatusField>
        <StatusField $width={ 27 }>*</StatusField>
        <StatusField $width={ 25 } />
        <StatusField $grow={ 1 }>Sum=0</StatusField>
        <StatusField $width={ 149 }>
          <ZoomButton type="button" aria-label="Zoom out">
            <svg width="12" height="12"><circle cx="6" cy="6" r="5" fill="#cfe3f4" stroke="#48708f" /><path d="M3.5 6h5" stroke="#1c4a78" strokeWidth="1.5" /></svg>
          </ZoomButton>
          <ZoomSlider type="range" aria-label="Zoom" value={ zoom } onChange={(e) => setZoom(Number(e.target.value)) } />
          <ZoomButton type="button" aria-label="Zoom in">
            <svg width="12" height="12"><circle cx="6" cy="6" r="5" fill="#cfe3f4" stroke="#48708f" /><path d="M3.5 6h5M6 3.5v5" stroke="#1c4a78" strokeWidth="1.5" /></svg>
          </ZoomButton>
        </StatusField>
        <StatusField $width={ 44 }>100%</StatusField>
      </StatusBar>
      <Desktop />
    </Window>
  )
}

export default App
